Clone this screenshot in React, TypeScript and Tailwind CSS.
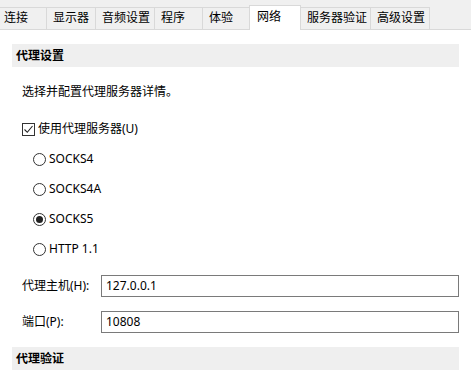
import React from 'react';

const tabs = [
  { label: '连接', w: 'w-[49px]' },
  { label: '显示器', w: 'w-[49px]' },
  { label: '音频设置', w: 'w-[59px]' },
  { label: '程序', w: 'w-[48px]' },
  { label: '体验', w: 'w-[47px]' },
  { label: '网络', w: 'w-[52px]', active: true },
  { label: '服务器验证', w: 'w-[70px]' },
  { label: '高级设置', w: 'w-[59px]' },
];

const proxies = ['SOCKS4', 'SOCKS4A', 'SOCKS5', 'HTTP 1.1'];

function Radio({ checked }: { checked?: boolean }) {
  return (
    <span className="w-[13px] h-[13px] rounded-full border border-[#333] bg-white flex items-center justify-center shrink-0">
      {checked && <span className="w-[7px] h-[7px] rounded-full bg-[#222]" />}
    </span>
  );
}

function Checkbox() {
  return (
    <span className="w-[13px] h-[13px] border border-[#333] bg-white flex items-center justify-center shrink-0">
      <svg width="11" height="11" viewBox="0 0 11 11" fill="none">
        <path d="M1.5 5.5 L4.3 8.3 L9.5 2" stroke="#222" strokeWidth="1.1" />
      </svg>
    </span>
  );
}

export default function App() {
  return (
    <div className="w-[471px] h-[372px] bg-white overflow-hidden text-[12px] text-black font-['Noto_Sans','Noto_Sans_CJK_SC',sans-serif]">
      {/* tab strip */}
      <div className="h-[30px] bg-[#f0f0f0] border-b border-[#d9d9d9] flex items-end">
        <div className="flex items-end ml-[-2px]">
          {tabs.map((t) =>
            t.active ? (
              <div
                key={t.label}
                className={`${t.w} h-[25px] -mb-px ml-[-1px] relative z-10 bg-white border-t border-l border-r border-[#d9d9d9] pl-[7px] pt-[3px] leading-[16px]`}
              >
                {t.label}
              </div>
            ) : (
              <div
                key={t.label}
                className={`${t.w} h-[22px] bg-[#f0f0f0] border-t border-r border-[#d9d9d9] pl-[6px] pt-[2px] leading-[16px]`}
              >
                {t.label}
              </div>
            )
          )}
        </div>
      </div>

      <div className="px-[12px] pt-[14px]">
        <div className="h-[23px] bg-[#efefef] pl-[4px] flex items-center font-bold">代理设置</div>

        <div className="pl-[10px]">
          <div className="mt-[15px] h-[20px] flex items-center">选择并配置代理服务器详情。</div>

          <div className="mt-[12px] h-[30px] flex items-center gap-[3px]">
            <Checkbox />
            <span>使用代理服务器(U)</span>
          </div>

          {proxies.map((p) => (
            <div key={p} className="h-[30px] flex items-center gap-[3px] pl-[11px]">
              <Radio checked={p === 'SOCKS5'} />
              <span>{p}</span>
            </div>
          ))}

          <div className="mt-[11px] flex items-center">
            <span className="w-[79px]">代理主机(H):</span>
            <div className="w-[358px] h-[22px] border border-[#7a7a7a] pl-[4px] flex items-center">127.0.0.1</div>
          </div>
          <div className="mt-[14px] flex items-center">
            <span className="w-[79px]">端口(P):</span>
            <div className="w-[358px] h-[22px] border border-[#7a7a7a] pl-[4px] flex items-center">10808</div>
          </div>
        </div>

        <div className="mt-[14px] h-[23px] bg-[#efefef] pl-[4px] flex items-center font-bold">代理验证</div>
      </div>
    </div>
  );
}
